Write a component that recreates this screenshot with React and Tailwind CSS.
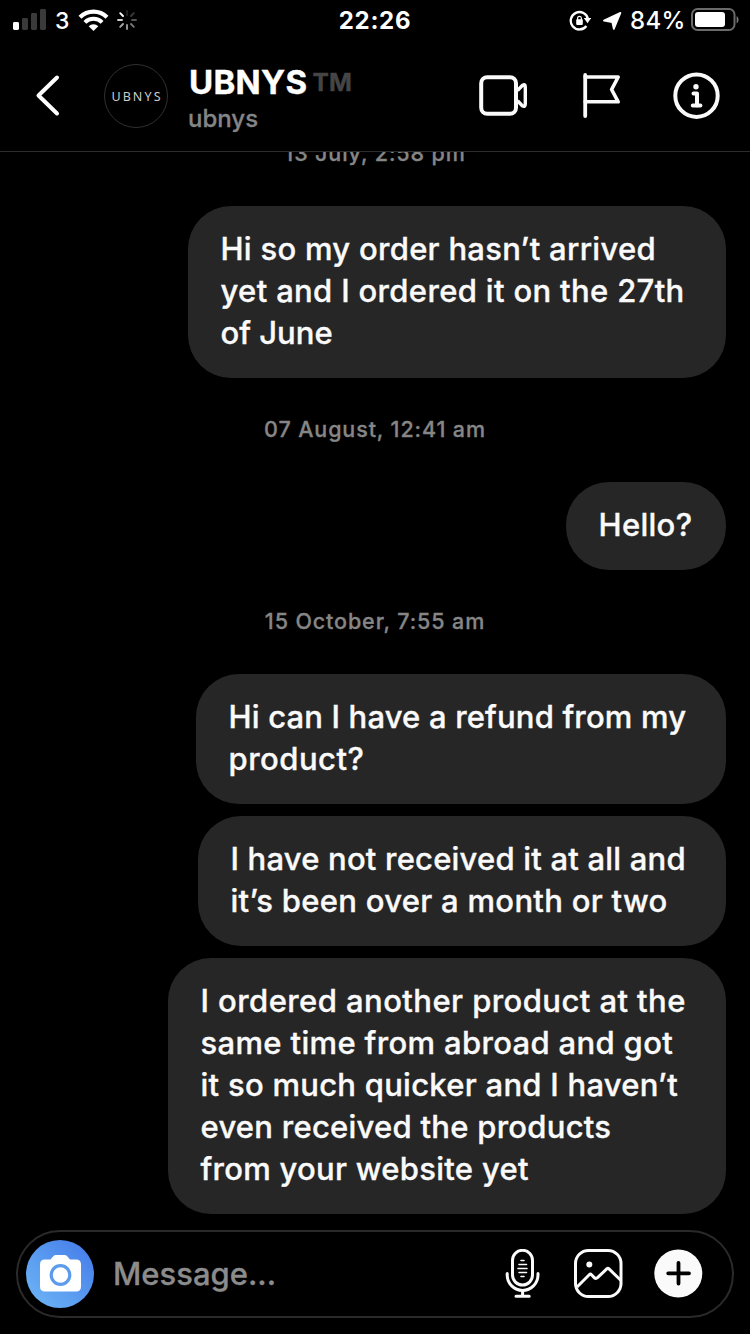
const font = "font-[Inter,'Liberation_Sans',sans-serif]";

function StatusBar() {
  return (
    <div className="grid h-10 grid-cols-3 items-center">
      <div className="flex h-10 items-center pl-[13px]">
        <svg width="34" height="40" viewBox="13 0 34 40" className="shrink-0">
          <rect x="13" y="22" width="6" height="8" rx="1.4" fill="#fff" />
          <rect x="22" y="18" width="6" height="12" rx="1.4" fill="#3a3a3a" />
          <rect x="31" y="13" width="6" height="17" rx="1.4" fill="#3a3a3a" />
          <rect x="40" y="9" width="6" height="21" rx="1.4" fill="#3a3a3a" />
        </svg>
        <span className="ml-[8px] w-[16px] pt-[2px] text-[23px] leading-[38px] font-medium">3</span>
        <svg width="32" height="40" viewBox="78 0 32 40" className="ml-[7px] shrink-0" fill="none" stroke="#fff">
          <path d="M80 17.2a19.2 19.2 0 0 1 27 0" strokeWidth="4.2" />
          <path d="M84.9 22.3a12.2 12.2 0 0 1 17.2 0" strokeWidth="4" />
          <path d="M93.5 31l-4.8-4.8a6.8 6.8 0 0 1 9.6 0z" fill="#fff" stroke="none" />
        </svg>
        <svg width="22" height="40" viewBox="116 0 22 40" className="ml-[6px] shrink-0" strokeWidth="1.9" strokeLinecap="round">
          <path d="M127 11v4" stroke="#222" />
          <path d="M133.800 13.200l-2.800 2.800" stroke="#3a3a3a" />
          <path d="M132 20h4" stroke="#555" />
          <path d="M131 24l2.800 2.800" stroke="#777" />
          <path d="M127 25v4" stroke="#999" />
          <path d="M123 24l-2.800 2.800" stroke="#aaa" />
          <path d="M122 20h-4" stroke="#ccc" />
          <path d="M123 16l-2.800-2.800" stroke="#fff" />
        </svg>
      </div>
      <div className="pt-[2px] text-center text-[24px] leading-[38px] font-bold tracking-[0.7px]">22:26</div>
      <div className="flex h-10 items-center justify-end pr-[11px]">
        <svg width="22" height="40" viewBox="569 0 22 40" className="shrink-0">
          <path d="M586.4 26a8.700 8.700 0 1 1 1.600-6.800" fill="none" stroke="#fff" strokeWidth="2.300" />
          <path d="M583.800 18h7.400l-3.700 5.200z" fill="#fff" />
          <rect x="576.200" y="19.300" width="6.600" height="5.600" rx="0.8" fill="#fff" />
          <path d="M577.600 20v-1.800a1.900 1.900 0 0 1 3.800 0V20" fill="none" stroke="#fff" strokeWidth="1.200" />
        </svg>
        <svg width="20" height="40" viewBox="602 0 20 40" className="ml-[11px] shrink-0">
          <path d="M620.400 12.900L613.800 28.800L612.300 22L604 20.600z" fill="#fff" stroke="#fff" strokeWidth="1.800" strokeLinejoin="round" />
        </svg>
        <span className="ml-[8px] w-[56px] pt-[2px] text-[24px] leading-[38px] font-medium tracking-[0.300px] whitespace-nowrap">84%</span>
        <svg width="48" height="40" viewBox="691 0 48 40" className="ml-[5px] shrink-0">
          <rect x="692" y="9" width="42.500" height="21" rx="5.500" fill="none" stroke="#6a6a6a" strokeWidth="2" />
          <rect x="695" y="12" width="30" height="15" rx="3" fill="#fff" />
          <path d="M736.600 16v7.500q2-1.300 2-3.750T736.600 16z" fill="#777" />
        </svg>
      </div>
    </div>
  );
}

function ChatHeader() {
  return (
    <div className="flex h-[112px] items-center border-b border-[#2c2c2c] pl-[34px]">
      <svg width="28" height="44" viewBox="34 74 28 44" className="shrink-0" fill="none" stroke="#fff" strokeWidth="4" strokeLinecap="round" strokeLinejoin="round">
        <path d="M57 77.500L38.500 95.500L57 113.500" />
      </svg>
      <div className="ml-[42px] flex size-[64px] shrink-0 items-center justify-center rounded-full border border-[#303030] pt-[3px] pl-[2px] font-['Noto_Sans',sans-serif] text-[12.500px] tracking-[2.100px] text-[#cccccc]">
        UBNYS
      </div>
      <div className="ml-[21px] flex w-[270px] flex-col pt-[6px]">
        <div className="flex h-[40px] items-center pt-[2px] text-[33px] font-bold tracking-[0.300px] whitespace-nowrap [-webkit-text-stroke:0.4px]">
          UBNYS
          <span className="ml-[5px] text-[24.500px] font-bold text-[#454545]">TM</span>
        </div>
        <div className="-ml-px h-[34px] text-[24px] leading-[34px] font-medium text-[#858585] [-webkit-text-stroke:0.3px]">ubnys</div>
      </div>
      <svg width="50" height="44" viewBox="478 74 50 44" className="ml-[19px] shrink-0" fill="none" stroke="#fafafa" strokeWidth="4" strokeLinejoin="round">
        <rect x="481.200" y="77.200" width="34.800" height="36.600" rx="6" />
        <path d="M517.500 90.500l4.800-5q3-2 3 1.500v17q0 3.500-3 1.800l-4.800-5" strokeWidth="3.400" />
      </svg>
      <svg width="42" height="50" viewBox="581 71 42 50" className="ml-[53px] shrink-0" fill="none" stroke="#fafafa" strokeWidth="3.800" strokeLinecap="round" strokeLinejoin="round">
        <path d="M585.200 75v41" />
        <path d="M585.200 77h33l-6.600 12.500l6.600 12.300h-33" strokeWidth="3.600" />
      </svg>
      <svg width="48" height="48" viewBox="672 72 48 48" className="ml-[49px] shrink-0">
        <circle cx="696.500" cy="95.700" r="21.200" fill="none" stroke="#fafafa" strokeWidth="4" />
        <circle cx="696" cy="86.700" r="2.700" fill="#fafafa" />
        <path d="M693.500 93.500h3.500v12.200M692.800 105.500h7.600" fill="none" stroke="#fafafa" strokeWidth="4" strokeLinecap="round" strokeLinejoin="round" />
      </svg>
    </div>
  );
}

function Stamp({ children }) {
  return (
    <div className="h-[104px] text-center text-[21.500px] leading-[102px] font-medium tracking-[0.880px] text-[#868686] [-webkit-text-stroke:0.3px]">{children}</div>
  );
}

function Bubble({ lines, className }) {
  return (
    <div className={"self-end rounded-[43px] bg-[#262626] pt-[22px] pb-[24px] pl-[32.5px] text-[31px] leading-[42px] font-medium text-[#fafafa] [-webkit-text-stroke:0.35px] " + className}>
      {lines.map(([text, tracking]) => (
        <p key={text} className={"whitespace-nowrap " + tracking}>{text}</p>
      ))}
    </div>
  );
}

function Composer() {
  return (
    <div className="mx-4 mt-4 flex h-[88px] items-center rounded-full border-2 border-[#2a2a2a] pl-[8px]">
      <div className="flex size-[68px] shrink-0 items-center justify-center rounded-full bg-linear-to-tr from-[#70b8f6] to-[#4478e8]">
        <svg width="42" height="38" viewBox="39 1253 42 38">
          <path d="M45 1257.500h5.500l3-3.400q1-1 2.500-1h8.500q1.500 0 2.500 1l3 3.400H76q5 0 5 5v22q0 5-5 5H45q-5 0-5-5v-22q0-5 5-5z" fill="#fff" />
          <circle cx="60.500" cy="1273" r="9.300" fill="none" stroke="#5c9bec" strokeWidth="3.200" />
        </svg>
      </div>
      <span className="ml-[19px] w-[380px] text-[31px] leading-[42px] font-medium text-[#8c8c8c] [-webkit-text-stroke:0.3px]">Message...</span>
      <svg width="36" height="50" viewBox="505 1249 36 50" className="ml-[12px] shrink-0" fill="none" stroke="#fafafa" strokeLinecap="round">
        <rect x="512.500" y="1250.300" width="20" height="34.700" rx="10" strokeWidth="3" />
        <path d="M507.200 1273.500v1.500a15.300 15.300 0 0 0 30.800 0v-1.500" strokeWidth="3" />
        <path d="M522.600 1290.500v5M516 1296.200h13.200" strokeWidth="3" />
        <path d="M521 1260.500h3M519 1264.500h7.500M518 1268.500h9M519 1272.500h7.500M521 1276.500h3" strokeWidth="1.600" />
      </svg>
      <svg width="50" height="50" viewBox="573 1249 50 50" className="ml-[32px] shrink-0" fill="none" stroke="#fafafa" strokeWidth="3" strokeLinejoin="round">
        <rect x="575.500" y="1250.500" width="45.500" height="46" rx="13" />
        <path d="M577 1287l12.500-12.500q1-.8 2 .2l3 3.200q1.500 1 3-.2l9.500-9q1-.8 2 .2l12 11.600" />
        <circle cx="589.300" cy="1264.500" r="3" fill="#fafafa" stroke="none" />
      </svg>
      <svg width="50" height="50" viewBox="653 1249 50 50" className="ml-[30px] shrink-0">
        <circle cx="678.300" cy="1273.500" r="24" fill="#fafafa" />
        <path d="M678.500 1263v20.500M668.200 1273.300h20.800" stroke="#000" strokeWidth="3.800" strokeLinecap="round" />
      </svg>
    </div>
  );
}

export default function App() {
  return (
    <div className={"flex h-[1334px] w-[750px] flex-col overflow-hidden bg-black text-white " + font}>
      <StatusBar />
      <ChatHeader />
      <main className="flex h-[1062px] shrink-0 flex-col overflow-hidden px-6">
        <div className="-mt-[50px] shrink-0"><Stamp>13 July, 2:58 pm</Stamp></div>
        <Bubble
          className="w-[538px]"
          lines={[
            ["Hi so my order hasn’t arrived", "tracking-[0.28px]"],
            ["yet and I ordered it on the 27th", "tracking-[0.34px]"],
            ["of June", "tracking-[0px]"],
          ]}
        />
        <Stamp>07 August, 12:41 am</Stamp>
        <Bubble className="w-[160px]" lines={[["Hello?", "tracking-[0.3px]"]]} />
        <Stamp>15 October, 7:55 am</Stamp>
        <div className="flex flex-col gap-3">
          <Bubble
            className="w-[530px]"
            lines={[
              ["Hi can I have a refund from my", "tracking-[0.17px]"],
              ["product?", "tracking-[0.5px]"],
            ]}
          />
          <Bubble
            className="w-[528px]"
            lines={[
              ["I have not received it at all and", "tracking-[0.2px]"],
              ["it’s been over a month or two", "tracking-[0.3px]"],
            ]}
          />
          <Bubble
            className="w-[558px]"
            lines={[
              ["I ordered another product at the", "tracking-[0.43px]"],
              ["same time from abroad and got", "tracking-[0.34px]"],
              ["it so much quicker and I haven’t", "tracking-[0.27px]"],
              ["even received the products", "tracking-[0.26px]"],
              ["from your website yet", "tracking-[0.28px]"],
            ]}
          />
        </div>
      </main>
      <Composer />
    </div>
  );
}
